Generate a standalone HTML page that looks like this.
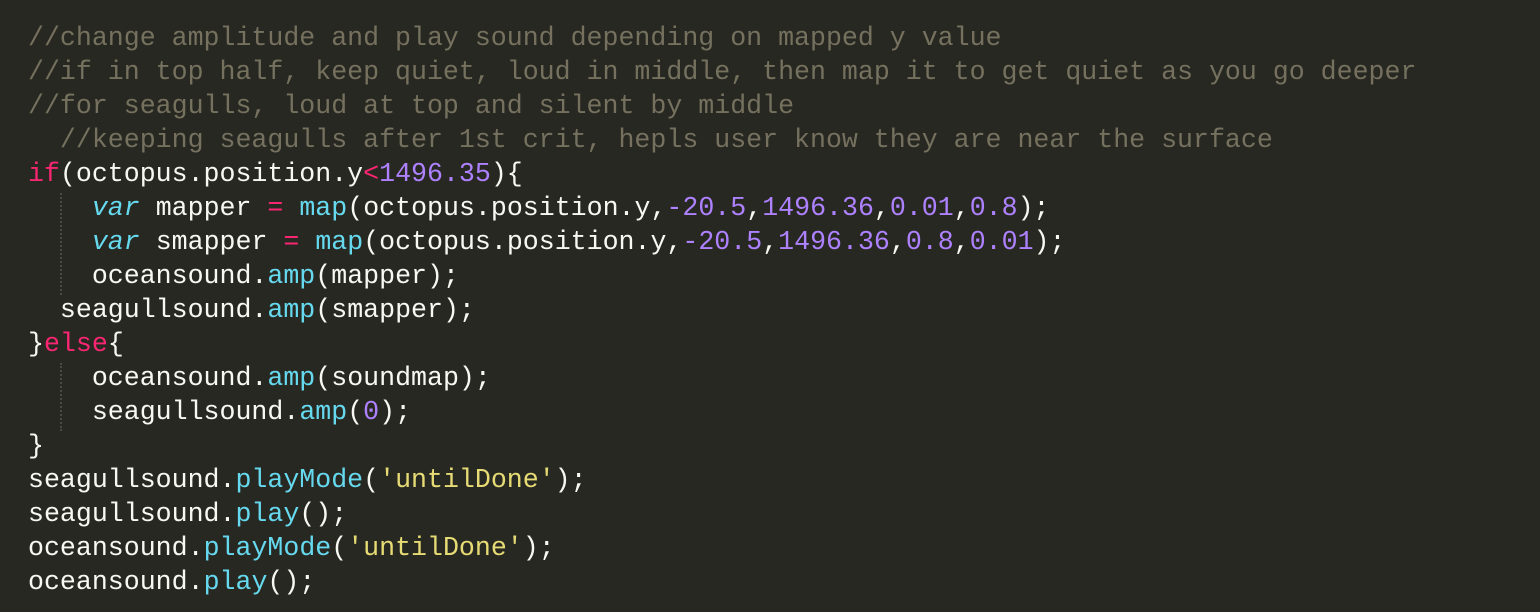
<!DOCTYPE html>
<html><head><meta charset="utf-8"><style>
html,body{margin:0;padding:0;background:#272822;width:1540px;height:612px;overflow:hidden}
pre{margin:0;padding:21px 0 0 28px;font-family:"Liberation Mono",monospace;font-size:26.6px;line-height:34px;color:#f8f8f2;position:relative}
.c{color:#75715e}.k{color:#f92672}.f{color:#66d9ef}.n{color:#ae81ff}.s{color:#e6db74}.i{color:#66d9ef;font-style:italic}
.g{position:absolute;left:60px;width:0;border-left:2px dotted #4a4a44}
</style></head><body>
<pre><div class="g" style="top:193px;height:102px"></div><div class="g" style="top:363px;height:68px"></div><span class="c">//change amplitude and play sound depending on mapped y value
//if in top half, keep quiet, loud in middle, then map it to get quiet as you go deeper
//for seagulls, loud at top and silent by middle
  //keeping seagulls after 1st crit, hepls user know they are near the surface</span>
<span class="k">if</span>(octopus.position.y<span class="k">&lt;</span><span class="n">1496.35</span>){
    <span class="i">var</span> mapper <span class="k">=</span> <span class="f">map</span>(octopus.position.y,<span class="n">-20.5</span>,<span class="n">1496.36</span>,<span class="n">0.01</span>,<span class="n">0.8</span>);
    <span class="i">var</span> smapper <span class="k">=</span> <span class="f">map</span>(octopus.position.y,<span class="n">-20.5</span>,<span class="n">1496.36</span>,<span class="n">0.8</span>,<span class="n">0.01</span>);
    oceansound.<span class="f">amp</span>(mapper);
  seagullsound.<span class="f">amp</span>(smapper);
}<span class="k">else</span>{
    oceansound.<span class="f">amp</span>(soundmap);
    seagullsound.<span class="f">amp</span>(<span class="n">0</span>);
}
seagullsound.<span class="f">playMode</span>(<span class="s">'untilDone'</span>);
seagullsound.<span class="f">play</span>();
oceansound.<span class="f">playMode</span>(<span class="s">'untilDone'</span>);
oceansound.<span class="f">play</span>();</pre>
</body></html>
